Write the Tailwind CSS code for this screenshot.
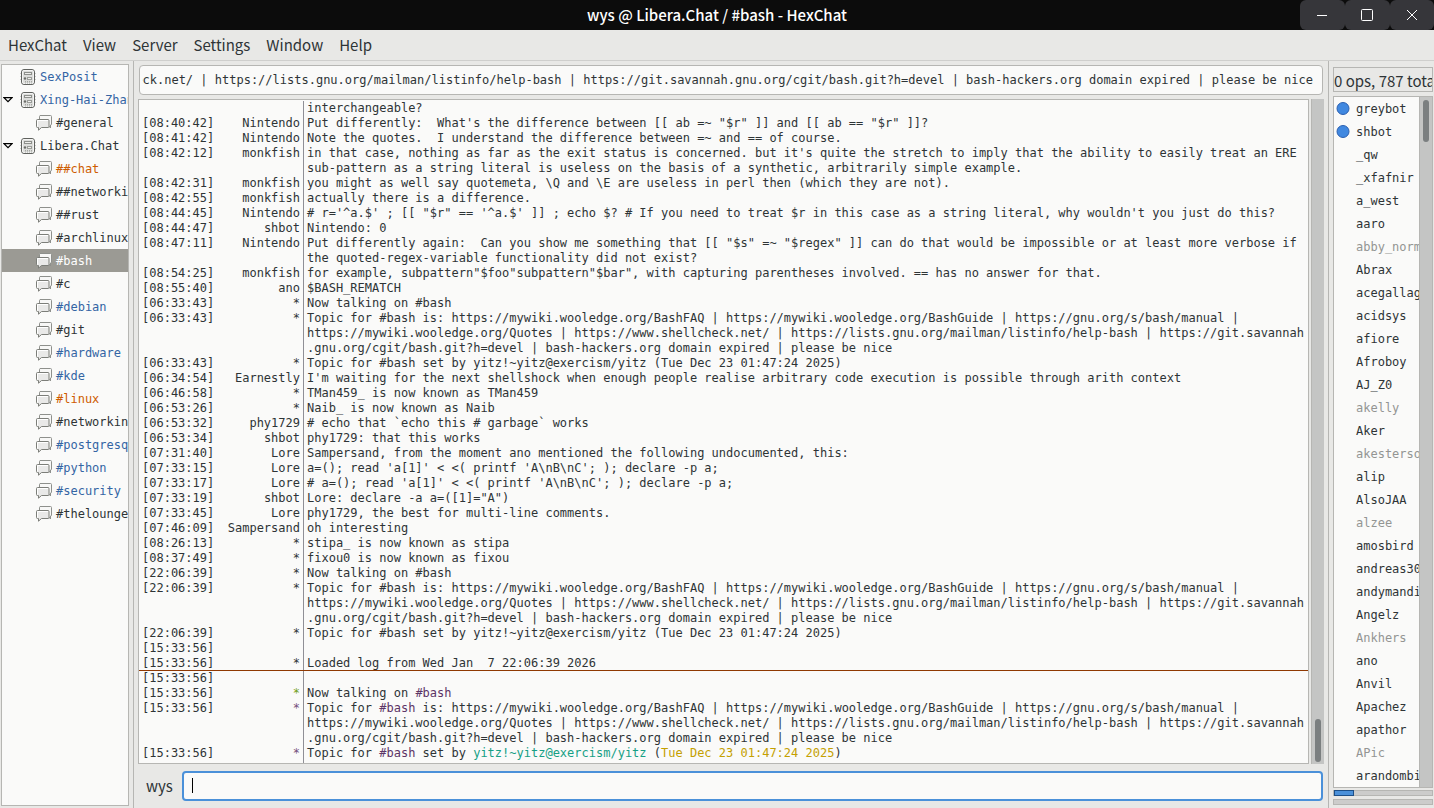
<!DOCTYPE html>
<html lang="en">
<head>
    <meta charset="UTF-8">
    <meta name="viewport" content="width=device-width, initial-scale=1.0">
    <title>wys @ Libera.Chat / #bash - HexChat</title>
    <script src="https://cdn.jsdelivr.net/npm/@tailwindcss/browser@4"></script>
</head>
<body class="flex flex-col h-screen overflow-hidden bg-[#e8e8e6] text-[#2e3436] font-['Noto_Sans_CJK_SC','Noto_Sans_CJK_JP',sans-serif]">

    <!-- Icons -->
    <svg class="hidden">
        <symbol id="icon-server" viewBox="0 0 16 16">
            <path d="M.5 4.500h2M.5 7.500h2M.5 10.500h2M13.500 4.500h2M13.500 7.500h2M13.500 10.500h2" stroke="#a0a29e"/>
            <rect x="1.500" y=".5" width="13" height="15" rx="2.500" fill="#dcdddb" stroke="#5f615e"/>
            <rect x="2.500" y="1.500" width="11" height="13" rx="1.500" fill="none" stroke="#f4f4f3"/>
            <rect x="4.500" y="3.500" width="7" height="2" fill="#eeeeec" stroke="#8e908c"/>
            <circle cx="5" cy="9.500" r="1.200" fill="#6a6c68"/>
            <rect x="7.500" y="8.500" width="4" height="2" fill="#eeeeec" stroke="#9b9d99"/>
            <path d="M5.500 12v2.500M7.500 12v2.500M9.500 12v2.500M11.500 12v2.500" stroke="#a5a7a3" stroke-dasharray="1 .5"/>
        </symbol>
        <symbol id="icon-channel" viewBox="0 0 16 16">
            <path d="M4 .5h10.500a1 1 0 0 1 1 1v7.500a1 1 0 0 1-1 1v3l-2.500-3H3.500v-8.500a1 1 0 0 1 .5-1z" fill="#f8f8f7" stroke="#8e908c"/>
            <path d="M1.500 4.500h10.500a1 1 0 0 1 1 1v6a1 1 0 0 1-1 1H5.500l-3 2.700v-2.700h-1a1 1 0 0 1-1-1v-6a1 1 0 0 1 1-1z" fill="#e9e9e8" stroke="#7c7e79"/>
            <path d="M1.500 11.500v-6h10.500" fill="none" stroke="#fff"/>
        </symbol>
    </svg>

    <!-- Title bar -->
    <header class="flex items-center h-[30px] shrink-0 bg-[#0c0c0c] relative">
        <h1 class="flex-1 text-center text-white text-[15px] leading-[30px] font-medium">wys @ Libera.Chat / #bash - HexChat</h1>
        <div class="absolute right-0 top-0 flex h-[30px]">
            <button aria-label="Minimize" class="w-[45px] h-[30px] pr-px rounded-md bg-[#36363a] grid place-items-center">
                <svg class="w-3 h-3" viewBox="0 0 12 12"><path d="M1 6.500h10" stroke="#fff"/></svg>
            </button>
            <button aria-label="Maximize" class="w-[45px] h-[30px] pr-px rounded-md bg-[#36363a] grid place-items-center">
                <svg class="w-3 h-3" viewBox="0 0 12 12"><rect x=".5" y=".5" width="11" height="11" rx="1" fill="none" stroke="#fff"/></svg>
            </button>
            <button aria-label="Close" class="w-11 h-[30px] rounded-md bg-[#36363a] grid place-items-center">
                <svg class="w-3 h-3" viewBox="0 0 12 12"><path d="M1 1l10 10M11 1L1 11" stroke="#fff"/></svg>
            </button>
        </div>
    </header>

    <!-- Menu bar -->
    <nav class="flex items-center h-[31px] shrink-0 gap-4 px-2 text-[15px] leading-[30px] border-b border-[#cfcfcd]">
        <button>HexChat</button>
        <button>View</button>
        <button>Server</button>
        <button>Settings</button>
        <button>Window</button>
        <button>Help</button>
    </nav>

    <main class="flex flex-1 min-h-0 font-['DejaVu_Sans_Mono',monospace] text-[12px]">

        <!-- Channel tree -->
        <div class="w-[134px] shrink-0 border-r border-[#b6b6b3] pl-px pr-1 pt-[3px] pb-0.5">
            <ul id="channels" class="h-full overflow-hidden bg-[#fafaf9] border border-[#b6b6b3]"></ul>
        </div>

        <!-- Conversation -->
        <section class="flex flex-col flex-1 min-w-0 pl-1 pr-1 pt-[4px]">
            <input id="topic" aria-label="Topic" readonly
                class="h-[30px] shrink-0 mx-px px-0.5 border border-[#b6b6b3] rounded bg-[#fafaf9] outline-none"
                value="https://mywiki.wooledge.org/BashFAQ | https://mywiki.wooledge.org/BashGuide | https://gnu.org/s/bash/manual | https://mywiki.wooledge.org/Quotes | https://www.shellcheck.net/ | https://lists.gnu.org/mailman/listinfo/help-bash | https://git.savannah.gnu.org/cgit/bash.git?h=devel | bash-hackers.org domain expired | please be nice ">
            <div class="flex flex-1 min-h-0 mt-1 gap-0.5">
                <div id="log" class="flex flex-col flex-1 min-w-0 pt-px overflow-hidden border border-[#b6b6b3] bg-[#fafaf9] leading-[15px]"></div>
                <div class="flex flex-col justify-end w-[13px] bg-[#c4c5c4] border-l border-[#b6b6b3] px-[3px] pb-0.5">
                    <div class="h-[43px] rounded-full bg-[#7b7f80]"></div>
                </div>
            </div>
            <div class="flex items-center shrink-0 h-[44px]">
                <label for="message" class="pl-2 w-11 text-[15px] font-['Noto_Sans_CJK_SC','Noto_Sans_CJK_JP',sans-serif]">wys</label>
                <div class="relative flex-1 mr-px">
                    <input id="message" type="text" class="block w-full h-[30px] px-2 rounded border-2 border-[#4a90d9] bg-[#fafaf9] outline-none">
                    <span class="absolute left-[10px] top-[7px] w-px h-[15px] bg-black"></span>
                </div>
            </div>
        </section>

        <!-- User list -->
        <aside class="flex flex-col w-[106px] shrink-0 border-l border-[#b6b6b3] pl-1 pr-px pt-[6px] pb-[3px]">
            <div class="h-[25px] shrink-0 border border-[#b6b6b3] overflow-hidden whitespace-nowrap text-[15px] leading-[25px] font-['Noto_Sans_CJK_SC','Noto_Sans_CJK_JP',sans-serif]">0 ops, 787 tota</div>
            <div class="flex flex-1 min-h-0 mt-1 border border-[#b6b6b3]">
                <ul id="users" class="flex-1 min-w-0 overflow-hidden bg-[#fafaf9]"></ul>
                <div class="w-[13px] bg-[#c4c5c4] border-l border-[#b6b6b3] px-[3px] pt-[3px]">
                    <div class="h-[42px] rounded-full bg-[#7b7f80]"></div>
                </div>
            </div>
            <div class="h-1.5 shrink-0 mt-0.5 border border-[#b6b6b3] bg-[#cccccb]">
                <div class="w-5 h-1.5 -mt-px border border-[#1c4f87] bg-[#4a90d9]"></div>
            </div>
            <div class="h-1.5 shrink-0 mt-[3px] border border-[#b6b6b3] bg-[#cccccb]"></div>
        </aside>
    </main>

    <script>
        // [type, name, colour]
        const channels = [
            ["server", "SexPosit", "data"],
            ["open", "Xing-Hai-Zhan", "data"],
            ["chan", "#general", ""],
            ["open", "Libera.Chat", ""],
            ["chan", "##chat", "msg"],
            ["chan", "##networking", ""],
            ["chan", "##rust", ""],
            ["chan", "#archlinux", ""],
            ["chan", "#bash", "current"],
            ["chan", "#c", ""],
            ["chan", "#debian", "data"],
            ["chan", "#git", ""],
            ["chan", "#hardware", "data"],
            ["chan", "#kde", "data"],
            ["chan", "#linux", "msg"],
            ["chan", "#networking", ""],
            ["chan", "#postgresql", "data"],
            ["chan", "#python", "data"],
            ["chan", "#security", "data"],
            ["chan", "#thelounge", ""]
        ];

        const colours = {
            "": "",
            data: "text-[#3465a4]",
            msg: "text-[#ce5c00]",
            current: "bg-[#9b9a94] text-white"
        };

        document.getElementById("channels").innerHTML = channels.map(([type, name, colour]) => {
            const arrow = type === "open"
                ? `<svg class="w-2.5 h-1.5" viewBox="0 0 10 6"><path d="M1 .7h8L5 4.700z" fill="none" stroke="#000" stroke-width="1.200"/></svg>` : "";
            if (type === "chan") {
                return `<li class="flex items-center h-[23px] pl-[34px] gap-1 whitespace-nowrap ${colours[colour]}">
                    <svg class="w-4 h-4 shrink-0"><use href="#icon-channel"/></svg><span>${name}</span></li>`;
            }
            return `<li class="flex items-center h-[23px] pl-px whitespace-nowrap ${colours[colour]}">
                <span class="w-[17px] shrink-0">${arrow}</span>
                <svg class="w-4 h-4 mr-1 shrink-0"><use href="#icon-server"/></svg><span>${name}</span></li>`;
        }).join("");

        const topic = `https://mywiki.wooledge.org/BashFAQ | https://mywiki.wooledge.org/BashGuide | https://gnu.org/s/bash/manual |
https://mywiki.wooledge.org/Quotes | https://www.shellcheck.net/ | https://lists.gnu.org/mailman/listinfo/help-bash | https://git.savannah
.gnu.org/cgit/bash.git?h=devel | bash-hackers.org domain expired | please be nice`;
        const bash = `<span class="text-[#5c3566]">#bash</span>`;

        // [time, nick, text, kind]
        const log = [
            ["", "", `interchangeable?`],
            ["08:40:42", "Nintendo", `Put differently:  What's the difference between [[ ab =~ "$r" ]] and [[ ab == "$r" ]]?`],
            ["08:41:42", "Nintendo", `Note the quotes.  I understand the difference between =~ and == of course.`],
            ["08:42:12", "monkfish", `in that case, nothing as far as the exit status is concerned. but it's quite the stretch to imply that the ability to easily treat an ERE
sub-pattern as a string literal is useless on the basis of a synthetic, arbitrarily simple example.`],
            ["08:42:31", "monkfish", `you might as well say quotemeta, \\Q and \\E are useless in perl then (which they are not).`],
            ["08:42:55", "monkfish", `actually there is a difference.`],
            ["08:44:45", "Nintendo", `# r='^a.$' ; [[ "$r" == '^a.$' ]] ; echo $? # If you need to treat $r in this case as a string literal, why wouldn't you just do this?`],
            ["08:44:47", "shbot", `Nintendo: 0`],
            ["08:47:11", "Nintendo", `Put differently again:  Can you show me something that [[ "$s" =~ "$regex" ]] can do that would be impossible or at least more verbose if
the quoted-regex-variable functionality did not exist?`],
            ["08:54:25", "monkfish", `for example, subpattern"$foo"subpattern"$bar", with capturing parentheses involved. == has no answer for that.`],
            ["08:55:40", "ano", `$BASH_REMATCH`],
            ["06:33:43", "*", `Now talking on #bash`],
            ["06:33:43", "*", `Topic for #bash is: ${topic}`],
            ["06:33:43", "*", `Topic for #bash set by yitz!~yitz@exercism/yitz (Tue Dec 23 01:47:24 2025)`],
            ["06:34:54", "Earnestly", `I'm waiting for the next shellshock when enough people realise arbitrary code execution is possible through arith context`],
            ["06:46:58", "*", `TMan459_ is now known as TMan459`],
            ["06:53:26", "*", `Naib_ is now known as Naib`],
            ["06:53:32", "phy1729", `# echo that \`echo this # garbage\` works`],
            ["06:53:34", "shbot", `phy1729: that this works`],
            ["07:31:40", "Lore", `Sampersand, from the moment ano mentioned the following undocumented, this:`],
            ["07:33:15", "Lore", `a=(); read 'a[1]' &lt; &lt;( printf 'A\\nB\\nC'; ); declare -p a;`],
            ["07:33:17", "Lore", `# a=(); read 'a[1]' &lt; &lt;( printf 'A\\nB\\nC'; ); declare -p a;`],
            ["07:33:19", "shbot", `Lore: declare -a a=([1]="A")`],
            ["07:33:45", "Lore", `phy1729, the best for multi-line comments.`],
            ["07:46:09", "Sampersand", `oh interesting`],
            ["08:26:13", "*", `stipa_ is now known as stipa`],
            ["08:37:49", "*", `fixou0 is now known as fixou`],
            ["22:06:39", "*", `Now talking on #bash`],
            ["22:06:39", "*", `Topic for #bash is: ${topic}`],
            ["22:06:39", "*", `Topic for #bash set by yitz!~yitz@exercism/yitz (Tue Dec 23 01:47:24 2025)`],
            ["15:33:56", "", ``],
            ["15:33:56", "*", `Loaded log from Wed Jan  7 22:06:39 2026`, "marker"],
            ["15:33:56", "", ``],
            ["15:33:56", "*", `Now talking on ${bash}`, "join"],
            ["15:33:56", "*", `Topic for ${bash} is: ${topic}`, "topic"],
            ["15:33:56", "*", `Topic for ${bash} set by <span class="text-[#16a085]">yitz!~yitz@exercism/yitz</span> (<span class="text-[#c4a000]">Tue Dec 23 01:47:24 2025</span>)`, "topic"]
        ];

        const nickColours = { join: "text-[#73a01a]", topic: "text-[#75507b]" };

        document.getElementById("log").innerHTML = log.map(([time, nick, text, kind]) => `
            <div class="flex relative">
                <span class="w-[81px] shrink-0 pl-[3px]">${time && "[" + time + "]"}</span>
                <span class="w-[84px] shrink-0 text-right pr-[3px] border-r border-[#8f8f96] ${nickColours[kind] || ""}">${nick}</span>
                <span class="flex-1 min-w-0 pl-[3px] min-h-[15px] whitespace-pre-wrap">${text}</span>
                ${kind === "marker" ? `<hr class="absolute inset-x-0 bottom-0 border-t border-[#8f3902]">` : ""}
            </div>`).join("") + `<div class="flex-1 w-[165px] border-r border-[#8f8f96]"></div>`;

        const users = "greybot shbot _qw _xfafnir a_west aaro abby_normal Abrax acegallagher acidsys afiore Afroboy AJ_Z0 akelly Aker akesterson alip AlsoJAA alzee amosbird andreas303 andymandias Angelz Ankhers ano Anvil Apachez apathor APic arandombit".split(" ");
        const voiced = ["greybot", "shbot"];
        const away = ["abby_normal", "akelly", "akesterson", "alzee", "Ankhers", "APic"];

        document.getElementById("users").innerHTML = users.map(user => `
            <li class="flex items-center h-[23px] pl-0.5 gap-[6px] ${away.includes(user) ? "text-[#939593]" : ""}">
                <svg class="w-3.5 h-3.5 shrink-0" viewBox="0 0 14 14">${voiced.includes(user) ? `<circle cx="7" cy="6.500" r="6" fill="#4088e0" stroke="#2a5fb0"/>` : ""}</svg>
                <span>${user}</span>
            </li>`).join("");

        // keep the end of the topic in view
        const topicBox = document.getElementById("topic");
        topicBox.scrollLeft = topicBox.scrollWidth;
    </script>
</body>
</html>
